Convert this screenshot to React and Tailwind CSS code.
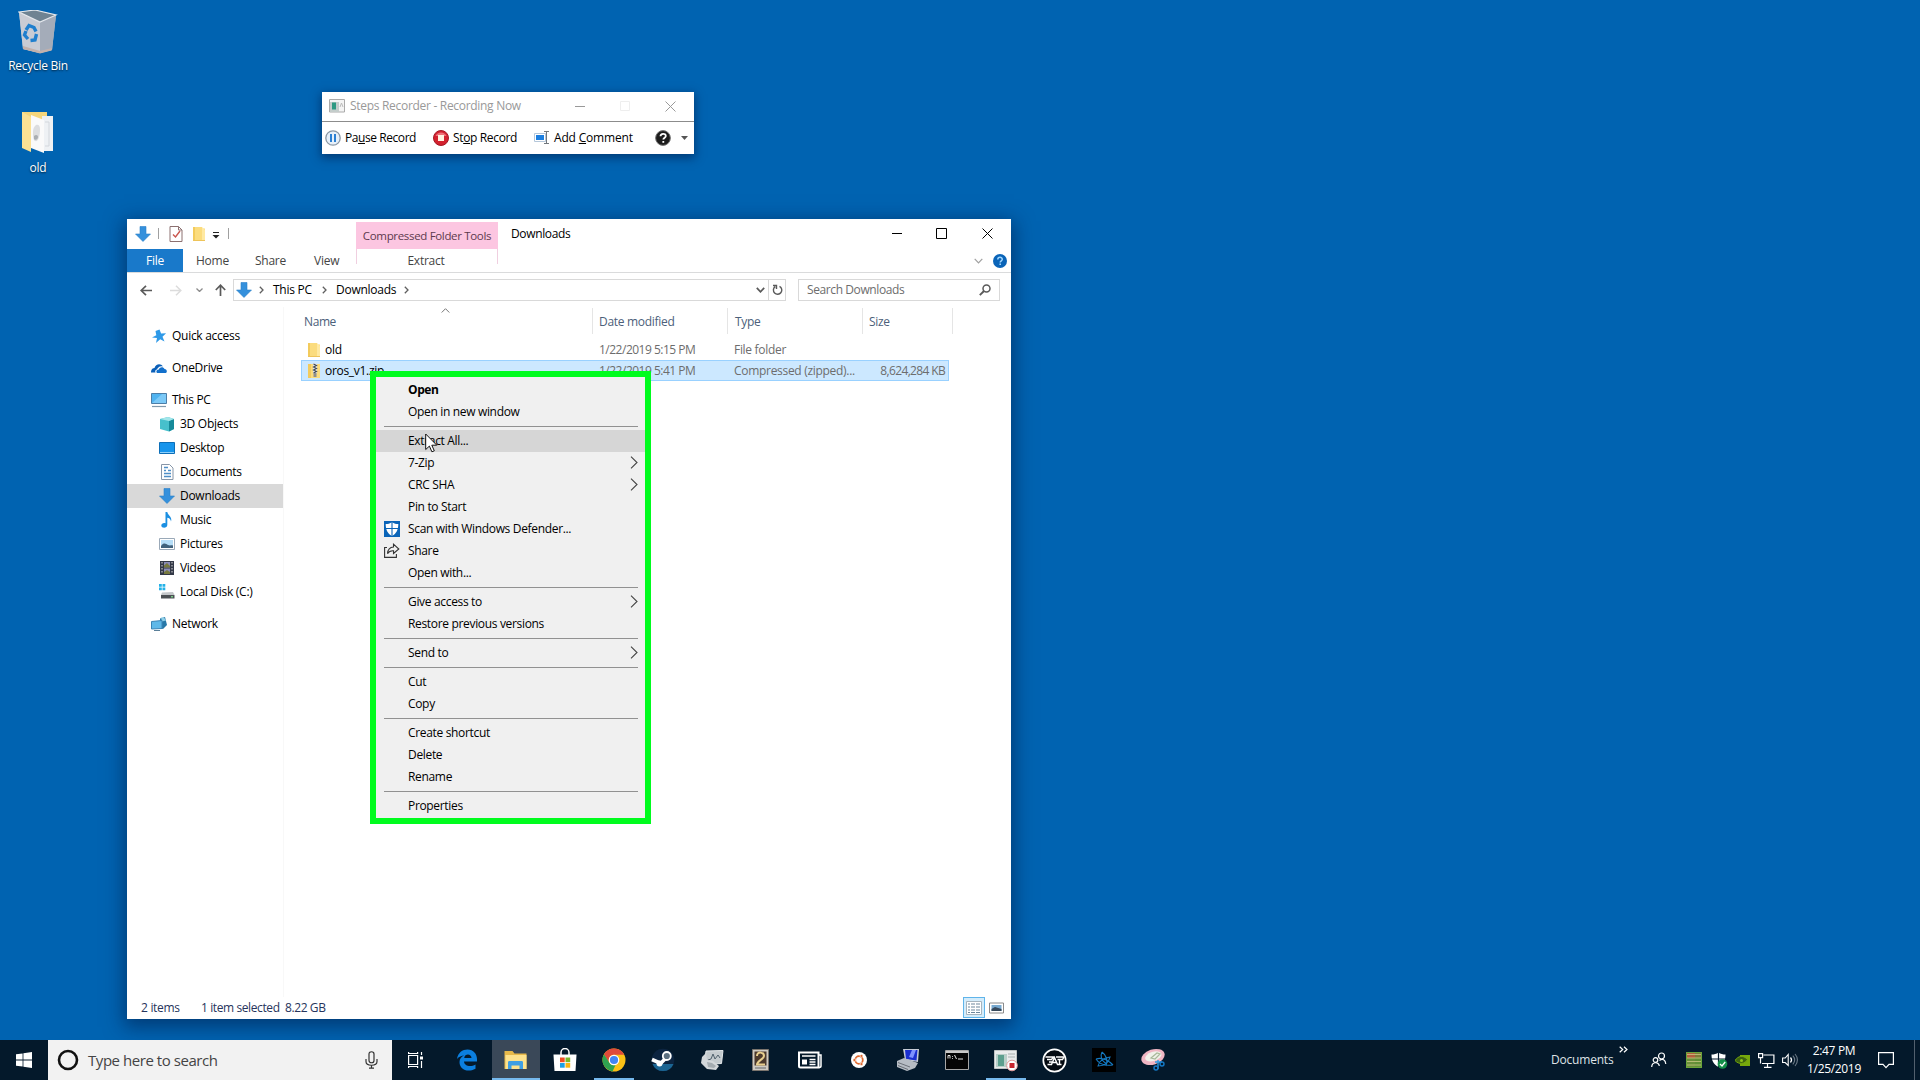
import React from 'react';

function Svg({ w = 16, h = 16, vb, className = '', children }) {
  return (
    <svg width={w} height={h} viewBox={vb || `0 0 ${w} ${h}`} fill="none" className={`shrink-0 ${className}`}>
      {children}
    </svg>
  );
}

/* ---------- shared glyphs ---------- */
const DownArrow = ({ s = 16 }) => (
  <Svg w={s} h={s} vb="0 0 16 16">
    <path d="M5 0.500h6v7.500h4.500L8 15.500.5 8H5z" fill="#3490dc" />
    <path d="M5 .5h6v7.500h4.500L8 15.500.5 8H5z" stroke="#2a7fc9" strokeWidth=".6" />
  </Svg>
);
const Folder = () => (
  <Svg w={14} h={16}>
    <path d="M1 1h9v1.500h3V15H1z" fill="#fbdc7e" />
    <path d="M1 1h2v14H1z" fill="#f3cb5c" />
    <path d="M10 1v13.500h3V4z" fill="#ffe9a2" />
    <path d="M1 14.500h12" stroke="#eec45a" />
  </Svg>
);
const ZipFolder = () => (
  <Svg w={14} h={16}>
    <path d="M1 1h12v14H1z" fill="#fbdc7e" />
    <path d="M1 1h3v14H1z" fill="#f3cb5c" />
    <path d="M6 0.500h4v10H6z" fill="#e3e5e8" />
    <path d="m6.500 1 3 1.500-3 1.500 3 1.500-3 1.500 3 1.500-3 1.500" stroke="#3f4652" strokeWidth="1.100" />
    <path d="M6.500 10h3v4h-3z" fill="#8f8f8f" />
  </Svg>
);
const Chevron = ({ c = '#5f5f5f', className }) => (
  <Svg w={5} h={8} className={className}><path d="M.8.8 4 4 .8 7.200" stroke={c} strokeWidth="1.300" /></Svg>
);

/* ---------- desktop ---------- */
const RecycleBin = () => (
  <Svg w={40} h={44}>
    <path d="M1 2 17 0l21 5-4 35-12 3L5 39z" fill="#b9bfc9" />
    <path d="M1 2 22 12v31L5 39z" fill="#c9ccd4" />
    <path d="M22 12 38 5l-4 35-12 3z" fill="#a4acb9" />
    <path d="M1 2 17 0l21 5-16 7z" fill="#6f8392" stroke="#e3e7ec" strokeWidth="1.200" />
    <path d="m5 36 17 5 12-3-.5 2.500-11.500 3L5 39z" fill="#c2b1ac" />
    <path d="m8 20 3-4.500 5 2 2 4M18.500 24l-1.500 6-4.500.5M10 29l-3.500-4 1.500-4" stroke="#1f7fce" strokeWidth="3.400" />
  </Svg>
);
const OpenFolder = () => (
  <Svg w={32} h={42}>
    <path d="M0 0h25v36H8L0 35z" fill="#f5d67b" />
    <path d="M20 4h11v35H20z" fill="#eef1f4" />
    <path d="m9 3 13 5v33L9 36z" fill="#fafafa" />
    <path d="M23 10h4v24h-4" stroke="#d3d7dc" />
    <path d="M0 0 9 5v35L0 36z" fill="#fbe194" />
    <path d="M11 20c0-8 7-10 7-3 0 8-2 13-5 12-2-1-2-5-2-9z" fill="#dcdddf" />
    <path d="M12 24c2-2 4-1 4 1s-2 4-4 2z" fill="#aaaeb2" />
  </Svg>
);

function DesktopIcon({ icon, label }) {
  return (
    <div className="flex h-[101px] w-[76px] flex-col items-center">
      <div className="flex h-[46px] items-start justify-center">{icon}</div>
      <span className="text-[12px] leading-[20px] tracking-[-0.27px] text-white [text-shadow:0_1px_2px_#000a]">{label}</span>
    </div>
  );
}

/* ---------- steps recorder ---------- */
function StepsRecorder() {
  return (
    <div className="absolute left-[322px] top-[92px] flex h-[62px] w-[372px] flex-col bg-white shadow-[0_3px_9px_1px_rgba(0,20,60,0.5)]">
      <div className="flex h-[30px] items-center border-b border-[#8c8c8c] pb-px pl-[7px] text-[#999]">
        <Svg w={16} h={14}>
          <path d="M.5.5h15v12.500H.5z" fill="#f4f4f4" stroke="#aaa" />
          <path d="M1 3h9v10H1z" fill="#c4cdcb" />
          <path d="M3 3.500h4v7H3z" fill="#2d9a83" />
          <path d="m11 8 1.500-4L14 8" stroke="#bbb" />
        </Svg>
        <span className="ml-[5px] w-[225px] text-[12px] tracking-[-0.3px]">Steps Recorder - Recording Now</span>
        <Svg w={10} h={10}><path d="M0 5.500h10" stroke="#999" /></Svg>
        <Svg w={10} h={10} className="ml-[35px]"><path d="M.5.5h9v9h-9z" stroke="#eee" /></Svg>
        <Svg w={11} h={11} className="ml-[35px]"><path d="m.5.5 10 10m0-10-10 10" stroke="#999" /></Svg>
      </div>
      <div className="flex flex-1 items-center pl-[3px] text-[12px] text-black">
        <Svg>
          <circle cx="8" cy="8" r="7.200" fill="#e6f0fa" stroke="#8b98a5" strokeWidth="1.300" />
          <path d="M5 4h2v8H5zM9 4h2v8H9z" fill="#2b80d3" />
        </Svg>
        <span className="ml-[4px] w-[88px] tracking-[-0.43px]">Pa<u>u</u>se Record</span>
        <Svg>
          <circle cx="8" cy="8" r="7.500" fill="#d3212e" stroke="#a31a24" />
          <path d="M2.500 6a6 6 0 0 1 11 0" fill="#ee7078" />
          <path d="M5 5h6v6H5z" fill="#fff3e0" />
        </Svg>
        <span className="ml-[4px] w-[81px] tracking-[-0.35px]">St<u>o</u>p Record</span>
        <Svg>
          <path d="M.5 3.500h11v8H.5z" fill="#fff" stroke="#b5c7da" />
          <path d="M2 5h8v5H2z" fill="#1c7fe0" />
          <path d="M10 1.500h5M12.500 1.500v12M10 13.500h5" stroke="#71777d" />
        </Svg>
        <span className="ml-[4px] w-[101px] tracking-[-0.18px]">Add <u>C</u>omment</span>
        <Svg>
          <circle cx="8" cy="8" r="7.400" fill="#1c1c1c" stroke="#777" />
          <path d="M5.500 6.300C5.500 3 10.800 3 10.800 6c0 1.700-2.500 1.700-2.500 3.600" stroke="#fff" strokeWidth="1.800" />
          <path d="M7.400 11h1.800v1.800H7.400z" fill="#fff" />
        </Svg>
        <Svg w={7} h={4} className="ml-[10px]"><path d="M0 0h7L3.500 4z" fill="#555" /></Svg>
      </div>
    </div>
  );
}

/* ---------- explorer ---------- */
function TitleBar() {
  return (
    <div className="flex h-[30px] shrink-0 items-stretch">
      <div className="flex w-[229px] items-center pb-px pl-[8px]">
        <DownArrow />
        <div className="ml-[7px] h-[11px] w-px bg-[#a0a0a0]" />
        <Svg w={14} h={16} className="ml-[10px]">
          <path d="M1 .5h8.500L13 4v11.500H1z" fill="#fff" stroke="#8c7070" />
          <path d="M9.500.5V4H13" stroke="#8c7070" />
          <path d="m4 8.500 2.500 2.500L11 5" stroke="#c9554d" strokeWidth="1.400" />
        </Svg>
        <div className="ml-[9px]"><Folder /></div>
        <Svg w={8} h={7} className="ml-[6px] mt-[3px]"><path d="M1 .5h6" stroke="#222" /><path d="M.5 3h7L4 6.500z" fill="#222" /></Svg>
        <div className="ml-[8px] h-[11px] w-px bg-[#a0a0a0]" />
      </div>
      <div className="mt-[3px] flex w-[142px] items-center justify-center whitespace-nowrap bg-[#fcc6e1] pt-px text-[11.500px] tracking-[-0.33px] text-[#5c3a4d]">Compressed Folder Tools</div>
      <div className="ml-[13px] w-[381px] pt-[6px] text-[12px] leading-[18px] tracking-[-0.35px] text-black">Downloads</div>
      <div className="flex items-center pb-[2px]">
        <Svg w={10} h={10}><path d="M0 5.500h10" stroke="#000" /></Svg>
        <Svg w={11} h={11} className="ml-[34px]"><path d="M.5.5h10v10H.5z" stroke="#000" /></Svg>
        <Svg w={11} h={11} className="ml-[35px]"><path d="m.5.5 10 10m0-10-10 10" stroke="#000" /></Svg>
      </div>
    </div>
  );
}

function RibbonTabs() {
  return (
    <div className="flex h-[24px] shrink-0 items-stretch border-b border-[#dadbdc] text-[12px] leading-[24px] tracking-[-0.25px] text-[#444]">
      <div className="w-[56px] bg-[#1979ca] text-center text-white">File</div>
      <div className="w-[59px] pl-[13px]">Home</div>
      <div className="w-[58px] pl-[13px]">Share</div>
      <div className="w-[56px] pl-[14px]">View</div>
      <div className="mb-[8px] w-[142px] border-x border-[#f0cfe0] pr-[2px] text-center">Extract</div>
      <div className="flex flex-1 items-center justify-end gap-[10px] pr-[4px]">
        <Svg w={9} h={6}><path d="m.7.8 3.800 4 3.800-4" stroke="#a0a0a0" strokeWidth="1.200" /></Svg>
        <Svg w={14} h={14}>
          <circle cx="7" cy="7" r="7" fill="#0a64b8" />
          <path d="M4.800 5.500C4.800 2.600 9.300 2.700 9.300 5.300c0 1.500-2.100 1.500-2.100 3.200" stroke="#9fd6ff" strokeWidth="1.500" />
          <path d="M6.400 9.600h1.600v1.500H6.400z" fill="#9fd6ff" />
        </Svg>
      </div>
    </div>
  );
}

function AddressRow() {
  return (
    <div className="flex h-[34px] shrink-0 items-center text-[12px]">
      <Svg w={12} h={11} className="ml-[13px]"><path d="M12 5.500H1.500M6 .8 1.200 5.500 6 10.200" stroke="#5a5a5a" strokeWidth="1.700" /></Svg>
      <Svg w={12} h={11} className="ml-[18px]"><path d="M0 5.500h10.500M6 .8l4.800 4.700L6 10.200" stroke="#dcdcdc" strokeWidth="1.500" /></Svg>
      <Svg w={7} h={4} className="ml-[14px]"><path d="m.5.5 3 3 3-3" stroke="#8a8a8a" strokeWidth="1.300" /></Svg>
      <Svg w={11} h={12} className="ml-[12px]"><path d="M5.500 12V1.500M.8 6l4.700-4.800L10.200 6" stroke="#5a5a5a" strokeWidth="1.700" /></Svg>
      <div className="ml-[7px] flex h-[22px] w-[553px] items-center border border-[#d9d9d9] tracking-[-0.25px] text-black">
        <div className="ml-[2px]"><DownArrow /></div>
        <Chevron className="ml-[7px]" />
        <span className="ml-[9px] w-[40px] whitespace-nowrap">This PC</span>
        <Chevron className="ml-[9px]" />
        <span className="ml-[9px] w-[60px]">Downloads</span>
        <Chevron className="ml-[8px]" />
        <Svg w={9} h={6} className="ml-auto"><path d="m.8.8 3.700 4 3.700-4" stroke="#5a5a5a" strokeWidth="1.700" /></Svg>
        <div className="ml-[3px] flex h-full w-[17px] items-center justify-center border-l border-[#d9d9d9]">
          <Svg w={11} h={12}><path d="M7.500 2.300a4.200 4.200 0 1 1-4.300.3M1 1.500h3.500V5" stroke="#5a5a5a" strokeWidth="1.400" /></Svg>
        </div>
      </div>
      <div className="ml-[12px] flex h-[22px] w-[202px] items-center justify-between border border-[#d9d9d9] pl-[8px] pr-[8px] tracking-[-0.4px] text-[#6d6d6d]">
        Search Downloads
        <Svg w={12} h={12}><circle cx="7.500" cy="4.500" r="3.500" stroke="#5a5a5a" strokeWidth="1.500" /><path d="M5 7 .8 11.200" stroke="#5a5a5a" strokeWidth="1.900" /></Svg>
      </div>
    </div>
  );
}

const treeIcons = {
  quick: <Svg><path d="m8.500 1.500 1.600 4 5-.2-3.600 3.400 2 4.800-4.300-2.300L5 15l1-5-5-.5 4.300-2.200-.8-4.300z" fill="#2f9ae8" /></Svg>,
  cloud: <Svg><path d="M0 12.500C-.2 9 2 8 3.500 8 4.500 4 9.500 2.500 12 6.500 8.500 5.500 6.500 8 6 9.500c-2 .2-2 2-1.500 3z" fill="#0a5fb8" /><path d="M6 13c-1.500-2 0-3.500 1.500-3.200C8.500 6.500 12.500 6.500 13.500 9c2.500.3 3 3 1.500 4z" fill="#1270cc" /></Svg>,
  pc: <Svg><path d="M.5 1.500h15v10H.5z" fill="#4fb3f0" stroke="#4c7ea8" /><path d="m1 11 10-9h4v9z" fill="#7cc9f7" /><path d="M1 14.500h14" stroke="#8199ab" strokeWidth="1.200" /></Svg>,
  cube: <Svg><path d="M1 3 9 1l6 2v10l-5 2.500L1 13z" fill="#47c0cc" /><path d="m10 5 5-2v10l-5 2.500z" fill="#168a9a" /><path d="M1 3 9 1l6 2-5 2z" fill="#a3e6ea" /></Svg>,
  desktop: <Svg><path d="M.5 2.500h15v11H.5z" fill="#1795ec" stroke="#0d6fb8" /><path d="M1 12.500h14" stroke="#8ed0fa" /></Svg>,
  doc: <Svg><path d="M2.500.5h8L14 4v11.500H2.500z" fill="#fff" stroke="#8796a8" /><path d="M5 3.500h4M5 6.500h2m2 0h3M5 9.500h7M5 12.500h7" stroke="#4f8fc7" strokeWidth="1.300" /></Svg>,
  down: <DownArrow />,
  music: <Svg><path d="M6.500 0h1.800c.5 3.500 5.200 4.500 3.700 9.500-.2-2.200-2-3.500-3.700-3.700V13c0 3.500-6 3.500-6 .5 0-2.300 2.500-3 4.200-2.300z" fill="#1b8fe2" /></Svg>,
  pic: <Svg><path d="M.5 2.500h15v11H.5z" fill="#fff" stroke="#9aa9b8" /><path d="M2 4h12v8H2z" fill="#b5ddf7" /><path d="M2 10c3-4 5-2 7-1s3 0 5 .500V12H2z" fill="#41627c" /></Svg>,
  video: <Svg><path d="M1 1h14v14H1z" fill="#333947" /><path d="M5 2h6v5.500H5zM5 8.500h6V14H5z" fill="#8b8cb8" /><path d="M5 5.500 8 3l3 3v1.500H5zM5 12l3-2 3 2v2H5z" fill="#77793f" /><path d="M3 2v12M13 2v12" stroke="#d9d9d9" strokeDasharray="1.500 1.500" /></Svg>,
  disk: <Svg><path d="M0 0h2.800v2.800H0zM3.500 0h2.800v2.800H3.500zM0 3.500h2.800v2.800H0zM3.500 3.500h2.800v2.800H3.500z" fill="#22b1e8" /><path d="m3 8.500 11-.5 1.500 3H2z" fill="#c4c7ca" /><path d="M2 11h13.500v3.500H2z" fill="#4c5054" /><path d="M12 12.800h2" stroke="#8aff9a" /></Svg>,
  net: <Svg><path d="M9 2.500 14 1l2 8-4 4-3-1z" fill="#2778a8" /><path d="M10 1.500h3l2 3-4 1z" fill="#8fcfe8" /><path d="M.5 5.500 11 4.500v8l-10.500.5z" fill="#5fb8e8" stroke="#3a83b5" /><path d="M3 14.500h6" stroke="#5a7f99" /></Svg>,
};

const tree = [
  { icon: 'quick', label: 'Quick access', gap: true },
  { icon: 'cloud', label: 'OneDrive', gap: true },
  { icon: 'pc', label: 'This PC' },
  { icon: 'cube', label: '3D Objects', child: true },
  { icon: 'desktop', label: 'Desktop', child: true },
  { icon: 'doc', label: 'Documents', child: true },
  { icon: 'down', label: 'Downloads', child: true, selected: true },
  { icon: 'music', label: 'Music', child: true },
  { icon: 'pic', label: 'Pictures', child: true },
  { icon: 'video', label: 'Videos', child: true },
  { icon: 'disk', label: 'Local Disk (C:)', child: true, gap: true },
  { icon: 'net', label: 'Network' },
];

function Sidebar() {
  return (
    <div className="w-[157px] shrink-0 border-r border-[#f8f8f8] pt-[17px]">
      {tree.map((t) => (
        <div
          key={t.label}
          className={`flex h-[24px] items-center gap-[5px] whitespace-nowrap text-[12px] tracking-[-0.28px] text-black ${t.child ? 'pl-[32px]' : 'pl-[24px]'} ${t.selected ? 'bg-[#d9d9d9]' : ''} ${t.gap ? 'mb-[8px]' : ''}`}
        >
          {treeIcons[t.icon]}
          <span>{t.label}</span>
        </div>
      ))}
    </div>
  );
}

const files = [
  { icon: <Folder />, name: 'old', date: '1/22/2019 5:15 PM', type: 'File folder', size: '' },
  { icon: <ZipFolder />, name: 'oros_v1.zip', date: '1/22/2019 5:41 PM', type: 'Compressed (zipped)...', size: '8,624,284 KB', selected: true },
];

function FileList() {
  return (
    <div className="flex-1 text-[12px] tracking-[-0.3px] text-[#6d6d6d]">
      <div className="flex h-[27px] pt-[1px] leading-[27px] text-[#4c607a]">
        <div className="flex w-[309px] border-r border-[#e5e5e5] pl-[20px]">
          <span className="w-[137px] tracking-[-0.4px]">Name</span>
          <Svg w={9} h={5}><path d="m.7 4.500 3.800-3.800 3.800 3.800" stroke="#777" /></Svg>
        </div>
        <div className="w-[135px] border-r border-[#e5e5e5] pl-[6px]">Date modified</div>
        <div className="w-[135px] border-r border-[#e5e5e5] pl-[7px]">Type</div>
        <div className="w-[90px] border-r border-[#e5e5e5] pl-[6px]">Size</div>
      </div>
      <div className="ml-[17px] mt-[5px] w-[648px]">
        {files.map((f) => (
          <div
            key={f.name}
            className={`flex h-[21px] items-center whitespace-nowrap border ${f.selected ? 'border-[#99d1ff] bg-[#cce8ff]' : 'border-transparent'}`}
          >
            <div className="ml-[5px] w-[18px]">{f.icon}</div>
            <span className="w-[274px] text-black">{f.name}</span>
            <span className="w-[135px] tracking-[-0.5px]">{f.date}</span>
            <span className="w-[112px]">{f.type}</span>
            <span className="flex-1 pr-[3px] text-right tracking-[-0.65px]">{f.size}</span>
          </div>
        ))}
      </div>
    </div>
  );
}

function StatusBar() {
  return (
    <div className="flex h-[22px] shrink-0 items-center pb-px pl-[14px] text-[12px] tracking-[-0.4px] text-[#26345c]">
      <span className="w-[60px] tracking-[-0.3px]">2 items</span>
      <span className="w-[84px]">1 item selected</span>
      <span>8.22 GB</span>
      <div className="ml-auto flex items-center gap-[4px] pr-[7px]">
        <div className="flex h-[21px] w-[22px] items-center justify-center border border-[#5fb4ea] bg-[#d3ecfb]">
          <Svg w={16} h={14}><path d="M.5.5h15v13H.5z" fill="#fff" stroke="#a6b4be" /><path d="M2 3h2m1 0h4m1 0h4M2 6h2m1 0h4m1 0h4M2 9h2m1 0h4m1 0h4M2 11.500h2m1 0h4m1 0h4" stroke="#6d879c" /></Svg>
        </div>
        <Svg w={15} h={12}><path d="M.5 1h14v10H.5z" fill="#fff" stroke="#8a8a8a" /><path d="M2.500 3h10v6h-10z" fill="#77a9d0" /><path d="M2.500 7 6 5l6.500 2v2h-10z" fill="#37485a" /></Svg>
      </div>
    </div>
  );
}

function Explorer() {
  return (
    <div className="absolute left-[127px] top-[219px] flex h-[800px] w-[884px] flex-col bg-white shadow-[0_5px_18px_3px_rgba(0,20,60,0.5)]">
      <TitleBar />
      <RibbonTabs />
      <AddressRow />
      <div className="flex flex-1">
        <Sidebar />
        <FileList />
      </div>
      <StatusBar />
    </div>
  );
}

/* ---------- context menu ---------- */
const Defender = () => (
  <Svg>
    <path d="M0 0h16v16H0z" fill="#0a64b8" />
    <path d="M8 1.200c2 1.400 4.200 1.800 6.300 1.800 0 5.500-1.700 9.600-6.300 12C3.400 12.600 1.700 8.500 1.700 3 3.800 3 6 2.600 8 1.200z" fill="#fff" />
    <path d="M8 1V15.500M1.500 7.500h13" stroke="#0a64b8" strokeWidth="1.100" />
  </Svg>
);
const ShareGlyph = () => (
  <Svg><path d="M3 4.500H.6v9.900h11.800V11M9.500 4V1.200L14.800 6l-5.300 4.500V7.800C6.500 7.600 4.800 8.500 3.500 10.600 3.800 6.500 6 4.200 9.500 4z" stroke="#333" strokeWidth="1.100" /></Svg>
);
const menu = [
  { label: 'Open', bold: true },
  { label: 'Open in new window' },
  null,
  { label: 'Extract All...', hover: true },
  { label: '7-Zip', sub: true },
  { label: 'CRC SHA', sub: true },
  { label: 'Pin to Start' },
  { label: 'Scan with Windows Defender...', icon: <Defender /> },
  { label: 'Share', icon: <ShareGlyph /> },
  { label: 'Open with...' },
  null,
  { label: 'Give access to', sub: true },
  { label: 'Restore previous versions' },
  null,
  { label: 'Send to', sub: true },
  null,
  { label: 'Cut' },
  { label: 'Copy' },
  null,
  { label: 'Create shortcut' },
  { label: 'Delete' },
  { label: 'Rename' },
  null,
  { label: 'Properties' },
];

function ContextMenu() {
  return (
    <div className="absolute left-[370px] top-[371px] h-[453px] w-[281px] border-[6px] border-[#00fc1e] bg-[#f0f0f0] pt-[2px]">
      {menu.map((m, i) =>
        m === null ? (
          <div key={i} className="flex h-[7px] items-center pl-[8px] pr-[7px]"><div className="h-px w-full bg-[#919191]" /></div>
        ) : (
          <div key={i} className={`flex h-[22px] items-center pl-[8px] pr-[6px] text-[12px] tracking-[-0.33px] text-black ${m.hover ? 'bg-[#d6d6d6]' : ''}`}>
            <div className="w-[24px] shrink-0">{m.icon}</div>
            <span className={m.bold ? 'flex-1 font-bold tracking-[-0.4px]' : 'flex-1'}>{m.label}</span>
            {m.sub && <Svg w={9} h={13} className="mb-px"><path d="m1 .7 6 5.800-6 5.800" stroke="#444" strokeWidth="1.100" /></Svg>}
          </div>
        )
      )}
    </div>
  );
}

const Cursor = () => (
  <Svg w={13} h={20} className="absolute left-[425px] top-[433px]">
    <path d="M.7 1v15.500l3.700-3.400 2.500 5.700 2.400-1-2.500-5.600h5z" fill="#fff" stroke="#111" />
  </Svg>
);

/* ---------- taskbar ---------- */
const Flag = () => (
  <Svg><path d="M0 2.300 6.600 1.400v6.200H0zM7.400 1.300 16 0v7.600H7.400zM0 8.400h6.600v6.200L0 13.700zM7.400 8.400H16V16l-8.600-1.300z" fill="#fff" /></Svg>
);
const taskIcons = {
  edge: <Svg w={22} h={22}><path d="M1 10C2 3.500 6.500.5 11.500.5c6 0 9.500 4.500 9.500 9.500v2.500H8c.3 4.500 6.500 6 11.500 3v4.200C11.500 24 3.500 20.500 3.500 13c0-3 2-5.500 4.500-6.500C6 6.500 2.500 8 1 10zm7.200-1h7.300c0-4.500-6.800-4.800-7.300 0z" fill="#0b7fe0" /></Svg>,
  explorer: <Svg w={23} h={20}><path d="M.5 1h8l2 2.500h12V19H.5z" fill="#e7b94a" /><path d="M1.500 5h21v14h-21z" fill="#fde28d" /><path d="M4 12.500c0-1 .5-1.500 1.500-1.500h12c1 0 1.500.5 1.500 1.500V19h-3.500v-3.500h-8V19H4z" fill="#3f9fe3" /></Svg>,
  store: <Svg w={24} h={24}><path d="M8 7V4.500a4 4 0 0 1 8 0V7" stroke="#fff" strokeWidth="1.500" /><path d="M.5 6.500h23L22.500 23h-21z" fill="#fff" /><path d="M7 9.500h4.700v4.700H7z" fill="#f04e23" /><path d="M12.500 9.500h4.700v4.700h-4.700z" fill="#7cb928" /><path d="M7 15h4.700v4.700H7z" fill="#1ba0e6" /><path d="M12.500 15h4.700v4.700h-4.700z" fill="#f9b512" /></Svg>,
  chrome: <Svg w={24} h={24}><circle cx="12" cy="12" r="11.500" fill="#fbc116" /><path d="M2 6.300A11.500 11.500 0 0 1 22.200 6.700H12a5.300 5.300 0 0 0-5 3.700L6.500 14z" fill="#df4a3a" /><path d="M2 6.300 7.400 14.700A5.300 5.300 0 0 0 13.500 17l-3 6.400A11.500 11.500 0 0 1 2 6.300z" fill="#2fa251" /><circle cx="12" cy="12" r="5.300" fill="#fff" /><circle cx="12" cy="12" r="4.100" fill="#4285f4" /></Svg>,
  steam: <Svg w={24} h={24}><circle cx="12" cy="12" r="11.300" fill="#0c2440" /><path d="M1.500 16h21a11.300 11.300 0 0 1-21 0z" fill="#1b6593" /><path d="m1 11.500 8 3.500M10 15l5-5" stroke="#fff" strokeWidth="3.600" /><circle cx="15.800" cy="8" r="4" fill="#5b6f80" stroke="#fff" strokeWidth="1.800" /><circle cx="8.500" cy="15.500" r="3" fill="#fff" /></Svg>,
  monitor: <Svg w={24} h={22}><path d="m6 2 17-.5-1.500 13-17 1z" fill="#c3cace" stroke="#e6eaec" /><path d="m8 11 3-1 2-5 2 5 3-4 2 3" stroke="#50616d" /><path d="m2 8 4-4 1 7 6 1 6 5-3 4-9-1-6-6z" fill="#d3d7da" /><path d="m7 13 5 1 4 3-2 2-6-1z" fill="#a3abb0" /></Svg>,
  two: <Svg w={17} h={22}><path d="M.5.5h16v21H.5z" fill="#cfcac2" stroke="#7b746d" /><path d="M2.500 2.500h12v14h-12z" fill="#4d3a2d" /><path d="M5 7c0-5 7-4 7 0 0 3-7 5-7 8.500h8" stroke="#e9cf8f" strokeWidth="2" /><path d="M3 19h11" stroke="#888" strokeWidth="1.500" /></Svg>,
  news: <Svg w={24} h={18}><path d="M1 1.500h19.500v15H2.500C1.500 16.500 1 16 1 15z" stroke="#fff" strokeWidth="2" /><path d="M21 4h2v11c0 1-.5 1.500-2 1.500" stroke="#fff" strokeWidth="1.500" /><path d="M4 5h13.500M4 10.500h5M11.500 8.500h6M11.500 11h6M11.500 13.500h6" stroke="#fff" strokeWidth="1.600" /><path d="M4 8.500h5v5H4z" fill="#fff" /></Svg>,
  ubuntu: <Svg w={16} h={16}><circle cx="8" cy="8" r="8" fill="#fff" /><circle cx="8" cy="8" r="3.800" stroke="#e0682e" strokeWidth="1.800" /><circle cx="3.400" cy="8" r="1.500" fill="#e0682e" stroke="#fff" strokeWidth=".6" /><circle cx="10.500" cy="3.900" r="1.500" fill="#e0682e" stroke="#fff" strokeWidth=".6" /><circle cx="10.500" cy="12.100" r="1.500" fill="#e0682e" stroke="#fff" strokeWidth=".6" /></Svg>,
  putty: <Svg w={24} h={24}><path d="m7 1 16 0-1 13-13-2z" fill="#c7ccd6" /><path d="m9 2 12.500 0-1 10.500-10.500-1.500z" fill="#1b2fd0" /><path d="m13 9 3-7h4l-3 8z" fill="#7f92ff" /><path d="m1 13 7-3 14 5-3 5-8 3-10-4z" fill="#b6bcc4" /><path d="m2 14.500 12 4.500M2 17.500l10 4" stroke="#6b7078" /></Svg>,
  cmd: <Svg w={24} h={20}><path d="M.5.5h23v19H.5z" fill="#050505" stroke="#a7a7a7" /><path d="M1 2h22" stroke="#c9c9c9" strokeWidth="2" /><path d="M3 5.500v3m0-3h2v3M7.500 6v.8m0 1.400V9M9.500 5l2 4M13 9h5" stroke="#e5e5e5" /></Svg>,
  steps: <Svg w={24} h={24}><path d="M.5 2.500h22v18H.5z" fill="#e9ecec" stroke="#c0c4c4" /><path d="M2 6h11v13H2z" fill="#b9cfc9" /><path d="M4 7h6v11H4z" fill="#5c9f8e" /><path d="M14 6h7M14 9h7" stroke="#a9b0b0" /><circle cx="18" cy="17.500" r="5.300" fill="#fff" stroke="#d99" /><path d="M15.500 15h5v5h-5z" fill="#c8252f" /></Svg>,
  star: <Svg w={25} h={25}><circle cx="12.500" cy="12.500" r="11.200" fill="#050b12" stroke="#fff" strokeWidth="1.700" /><path d="M3.500 9h8L9.500 11.500H5M14 9h8l-1.500 2.500h-5M5.500 16.500h4l3-7 3 7h4M7 14h3M11 14.500h3.500M17.500 11v5" stroke="#fff" strokeWidth="1.400" /></Svg>,
  battle: <Svg w={24} h={24}><path d="M0 0h24v24H0z" fill="#000" /><path d="M10 4c4 3 6 8 4 14M10 4c-2 4-1 9 5 12M4 11c6-2 12 1 17 6M4 11c3 5 9 7 17 6M6 18c1-5 6-8 12-9-1 5-5 9-12 9z" stroke="#1478bf" strokeWidth="1.100" /></Svg>,
  snip: <Svg w={26} h={24}><ellipse cx="13" cy="9" rx="12" ry="7.500" transform="rotate(-18 13 9)" fill="#f0b6c4" /><ellipse cx="13.500" cy="8.500" rx="8.500" ry="4.500" transform="rotate(-18 13 9)" fill="#f0f1ea" /><path d="m11 10 6-5 3 1-5 5z" stroke="#a9b89a" strokeWidth="1.200" /><path d="M15 14h7M18 12v9" stroke="#2b9ae0" strokeWidth="1.400" /><circle cx="16" cy="20" r="2" stroke="#1479c6" strokeWidth="1.400" /><circle cx="22" cy="16" r="2" stroke="#1479c6" strokeWidth="1.400" /></Svg>,
};
const tasks = ['edge', 'explorer', 'store', 'chrome', 'steam', 'monitor', 'two', 'news', 'ubuntu', 'putty', 'cmd', 'steps', 'star', 'battle', 'snip'];

function TaskButton({ id }) {
  const active = id === 'explorer';
  const running = id === 'chrome' || id === 'steps';
  return (
    <div className={`flex h-full w-[48px] flex-col items-center ${active ? 'bg-[#3a4858]' : ''}`}>
      <div className="flex h-[38px] items-center justify-center pr-px pt-[2px]">{taskIcons[id]}</div>
      {active && <div className="h-[2px] w-full bg-[#76b9ed]" />}
      {running && <div className="h-[2px] w-[40px] bg-[#76b9ed]" />}
    </div>
  );
}

function Tray() {
  return (
    <div className="ml-auto flex h-full w-[369px] items-center text-[12px] text-white">
      <span className="w-[61px] tracking-[-0.2px] text-[#dfe3e6]">Documents</span>
      <Svg w={9} h={7} className="mb-[21px] ml-[7px]"><path d="m.7.7 3 2.800-3 2.800M5 .7l3 2.800-3 2.800" stroke="#fff" strokeWidth="1.200" /></Svg>
      <Svg w={16} h={16} className="ml-[23px]"><circle cx="10.500" cy="4" r="3" stroke="#fff" strokeWidth="1.200" /><circle cx="4.500" cy="8" r="2.300" stroke="#fff" strokeWidth="1.200" /><path d="M.7 15c.2-5.500 7.300-5.500 7.600-1M8.500 8.500c3-2.500 6-.5 6.300 3.500" stroke="#fff" strokeWidth="1.200" /></Svg>
      <Svg w={16} h={16} className="ml-[19px]"><path d="M0 0h16v16H0z" fill="#6a8f3a" /><path d="M0 0h16v6H0z" fill="#b0603c" /><path d="M9 0h7v16H9z" fill="#5c8f34" fillOpacity=".6" /><path d="M0 2.500h16M0 6h16M0 9.500h16M0 13h16" stroke="#c9c583" strokeOpacity=".8" /><path d="M.5.5h15v15H.5z" stroke="#6aa53a" /></Svg>
      <Svg w={17} h={17} className="ml-[9px]"><path d="M7.500.5c2 1.500 4.500 2 7 2 0 6-2 10-7 12.500-5-2.500-7-6.500-7-12.500 2.500 0 5-.5 7-2z" fill="#fff" /><path d="M7.500 0v15M0 7h15" stroke="#04192b" strokeWidth="1.200" /><circle cx="11.500" cy="12" r="4.800" fill="#149049" /><path d="m9 12 2 2 3.200-4" stroke="#fff" strokeWidth="1.300" /></Svg>
      <Svg w={15} h={11} className="ml-[7px]"><path d="M5 0h10v11H5z" fill="#76a80c" /><path d="M0 5.500C3 1 8-.5 12.500 4.500 10 9 4 10 0 5.500z" fill="#3f6410" stroke="#76a80c" /><circle cx="6.500" cy="5.500" r="1.500" fill="#8fc31a" /></Svg>
      <Svg w={17} h={15} className="ml-[8px]"><path d="M5.500 2h10.400v8.500H4M.6.6h4v4h-4zM2.500 5v5.500M9.500 10.500V14M6 14.300h7.500" stroke="#fff" strokeWidth="1.200" /></Svg>
      <Svg w={16} h={14} className="ml-[7px]"><path d="M.6 5h2.600l3-3.500v11L3.200 9.500H.6z" stroke="#fff" strokeWidth="1.100" /><path d="M8.500 4.500c1.300 1.500 1.300 3.500 0 5" stroke="#fff" strokeWidth="1.200" /><path d="M10.800 2.700c2.300 2.600 2.300 6 0 8.600M13 1c3.200 3.500 3.200 8.500 0 12" stroke="#6d7b88" strokeWidth="1.100" /></Svg>
      <div className="ml-[7px] flex w-[58px] flex-col items-center leading-[18px] tracking-[-0.33px]">
        <span>2:47 PM</span>
        <span>1/25/2019</span>
      </div>
      <Svg w={16} h={17} className="ml-[15px]"><path d="M.6.6h14.800v11.800H11L8 15.600 5 12.400H.6z" stroke="#fff" strokeWidth="1.200" /></Svg>
      <div className="ml-[20px] h-full w-px bg-[#52606e]" />
    </div>
  );
}

function Taskbar() {
  return (
    <div className="absolute bottom-0 left-0 flex h-[40px] w-full items-center bg-[#04192b]">
      <div className="flex w-[48px] justify-center"><Flag /></div>
      <div className="flex h-full w-[344px] items-center bg-[#f2f2f2] pl-[9px] pr-[14px]">
        <Svg w={22} h={22}><circle cx="11" cy="11" r="9" stroke="#111" strokeWidth="2.600" /></Svg>
        <span className="ml-[9px] text-[15px] tracking-[-0.45px] text-[#444]">Type here to search</span>
        <Svg w={13} h={18} className="ml-auto"><path d="M4 3c0-3 5-3 5 0v6.500c0 3-5 3-5 0zM1 8v2.500C1 15.500 12 15.500 12 10.500V8M6.500 14.500v3M4 17.200h5" stroke="#333" strokeWidth="1.200" /></Svg>
      </div>
      <div className="mr-[3px] flex w-[48px] justify-center pr-px">
        <Svg w={17} h={16}><path d="M1.600 3.500h9v9h-9zM1.600 0v1.500h9V0M1.600 16v-1.500h9V16M14.500 0v3M14.500 9v7" stroke="#fff" strokeWidth="1.200" /><path d="M13 4.500h3v3h-3z" fill="#fff" /></Svg>
      </div>
      <div className="flex h-full gap-px">{tasks.map((id) => <TaskButton key={id} id={id} />)}</div>
      <Tray />
    </div>
  );
}

export default function App() {
  return (
    <div className="relative h-[1080px] w-[1920px] overflow-hidden bg-[#0063b1] font-['Open_Sans','Noto_Sans',sans-serif]">
      <div className="flex flex-col pt-[10px]">
        <DesktopIcon icon={<RecycleBin />} label="Recycle Bin" />
        <div className="pt-[1px]"><DesktopIcon icon={<OpenFolder />} label="old" /></div>
      </div>
      <StepsRecorder />
      <Explorer />
      <ContextMenu />
      <Cursor />
      <Taskbar />
    </div>
  );
}
